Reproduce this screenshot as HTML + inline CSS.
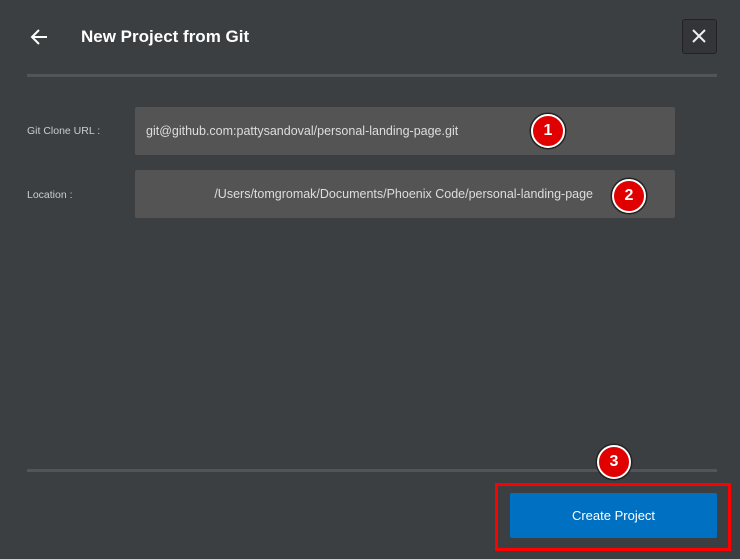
<!DOCTYPE html>
<html><head><style>
body{margin:0;width:740px;height:559px;background:#3c3f42;font-family:"Liberation Sans",sans-serif;position:relative;overflow:hidden}
.a{position:absolute}
.sep{position:absolute;left:27px;width:690px;height:3px;background:#525457}
.inp{position:absolute;left:135px;width:540px;height:48px;background:#545454;border-radius:2px;color:#ddd;font-size:12.5px;line-height:48px}
.lbl{position:absolute;left:27px;color:#ccc;font-size:10.5px}
.badge{position:absolute;width:30px;height:30px;border-radius:50%;background:#e00000;border:2px solid #fff;box-shadow:0 0 0 1.5px #222;color:#fff;font-weight:bold;font-size:16px;text-align:center;line-height:30px}
</style></head><body>
<svg class="a" style="left:29px;top:28px" width="20" height="18" viewBox="0 0 20 18"><path d="M18 9H3M10 2L3 9l7 7" stroke="#fff" stroke-width="2" fill="none"/></svg>
<div class="a" style="left:81px;top:27px;color:#fff;font-weight:bold;font-size:17px">New Project from Git</div>
<div class="a" style="left:682px;top:19px;width:33px;height:33px;border:1px solid #222;border-radius:3px;background:#333538"></div>
<svg class="a" style="left:691px;top:28px" width="16" height="16"><path d="M2 2L14 14M14 2L2 14" stroke="#eee" stroke-width="2"/></svg>
<div class="sep" style="top:74px"></div>
<div class="lbl" style="top:125px">Git Clone URL :</div>
<div class="inp" style="top:107px;padding-left:11px;width:529px">git@github.com:pattysandoval/personal-landing-page.git</div>
<div class="lbl" style="top:189px">Location :</div>
<div class="inp" style="top:170px;text-align:right;width:458px;padding-right:82px">/Users/tomgromak/Documents/Phoenix Code/personal-landing-page</div>
<div class="badge" style="left:531px;top:114px">1</div>
<div class="badge" style="left:612px;top:179px">2</div>
<div class="sep" style="top:469px"></div>
<div class="badge" style="left:597px;top:445px">3</div>
<div class="a" style="left:495px;top:483px;width:230px;height:62px;border:3px solid #f00"></div>
<div class="a" style="left:510px;top:493px;width:207px;height:45px;background:#0070c2;border-radius:2px;color:#fff;font-size:13px;text-align:center;line-height:45px">Create Project</div>
</body></html>
